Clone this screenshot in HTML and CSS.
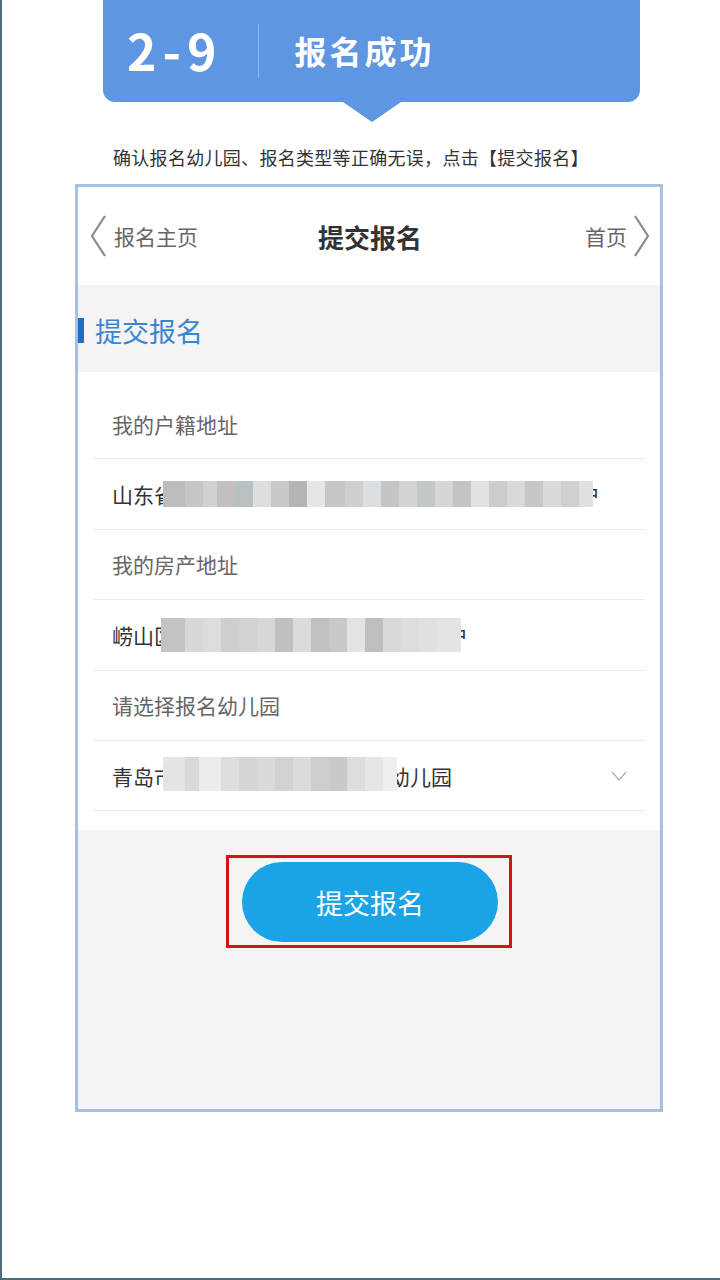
FILE: index.html
```html
<!DOCTYPE html>
<html lang="zh-CN">
<head>
<meta charset="utf-8">
<title>报名成功</title>
<link rel="stylesheet" href="styles.css">
</head>
<body>
<div class="page">
  <div class="banner">
    <span class="step">2-9</span>
    <span class="divider"></span>
    <span class="banner-title">报名成功</span>
  </div>
  <p class="hint">确认报名幼儿园、报名类型等正确无误，点击【提交报名】</p>

  <div class="phone">
    <div class="nav">
      <div class="nav-left">
        <svg class="chev" viewBox="0 0 18 44" width="18" height="44"><path d="M16 2 L3 22 L16 42" fill="none" stroke="#8a8a8a" stroke-width="2.2"/></svg>
        <span>报名主页</span>
      </div>
      <div class="nav-title">提交报名</div>
      <div class="nav-right">
        <span>首页</span>
        <svg class="chev" viewBox="0 0 18 44" width="18" height="44"><path d="M2 2 L15 22 L2 42" fill="none" stroke="#8a8a8a" stroke-width="2.2"/></svg>
      </div>
    </div>

    <div class="section-head">
      <span class="section-bar"></span>
      <span class="section-title">提交报名</span>
    </div>

    <div class="list">
      <div class="row label">我的户籍地址</div>
      <div class="row value">
        <span class="txt">山东省</span>
        <span class="mosaic m1">
          <i style="width:22px;background:#bdbdbd"></i><i style="width:18px;background:#c6c6c6"></i><i style="width:14px;background:#cfd1d3"></i><i style="width:18px;background:#c4bfbf"></i><i style="width:18px;background:#b9c0c2"></i><i style="width:18px;background:#dedede"></i><i style="width:18px;background:#c9c9c9"></i><i style="width:18px;background:#b4b4b4"></i><i style="width:18px;background:#e6e6e6"></i><i style="width:20px;background:#c8c6c6"></i><i style="width:18px;background:#cfcfcf"></i><i style="width:18px;background:#dcdfe1"></i><i style="width:18px;background:#c5c5c5"></i><i style="width:18px;background:#d3d3d3"></i><i style="width:18px;background:#c2c8ca"></i><i style="width:18px;background:#d6d6d6"></i><i style="width:18px;background:#c4c4c4"></i><i style="width:18px;background:#e1e1e1"></i><i style="width:18px;background:#cccccc"></i><i style="width:18px;background:#d9d9d9"></i><i style="width:18px;background:#c7c7c7"></i><i style="width:18px;background:#dadada"></i><i style="width:18px;background:#d0d0d0"></i><i style="width:14px;background:#e0e0e0"></i>
        </span>
        <span class="txt tail">户</span>
      </div>
      <div class="row label">我的房产地址</div>
      <div class="row value">
        <span class="txt">崂山区</span>
        <span class="mosaic m2">
          <i style="width:24px;background:#c3c3c3"></i><i style="width:18px;background:#d7d7d7"></i><i style="width:18px;background:#dcdcdc"></i><i style="width:18px;background:#cecece"></i><i style="width:18px;background:#d2d2d2"></i><i style="width:18px;background:#d7d7d7"></i><i style="width:18px;background:#c0c0c0"></i><i style="width:18px;background:#dbdbdb"></i><i style="width:18px;background:#c2c0c0"></i><i style="width:18px;background:#c8c8c8"></i><i style="width:18px;background:#e3e3e3"></i><i style="width:18px;background:#bebebe"></i><i style="width:18px;background:#d9d9d9"></i><i style="width:18px;background:#dddddd"></i><i style="width:18px;background:#e0e0e0"></i><i style="width:24px;background:#e4e4e4"></i>
        </span>
        <span class="txt tail">户</span>
      </div>
      <div class="row label">请选择报名幼儿园</div>
      <div class="row value select">
        <span class="txt">青岛市</span>
        <span class="mosaic m3">
          <i style="width:22px;background:#e4e4e4"></i><i style="width:14px;background:#d9d9d9"></i><i style="width:22px;background:#ececec"></i><i style="width:18px;background:#dedede"></i><i style="width:18px;background:#d6d6d6"></i><i style="width:18px;background:#dadada"></i><i style="width:18px;background:#d2d2d2"></i><i style="width:18px;background:#dbdbdb"></i><i style="width:18px;background:#cdcdcd"></i><i style="width:18px;background:#c9c9c9"></i><i style="width:18px;background:#dddddd"></i><i style="width:18px;background:#e6e6e6"></i><i style="width:14px;background:#eeeeee"></i>
        </span>
        <span class="txt tail3">幼儿园</span>
        <svg class="dd" viewBox="0 0 16 10" width="16" height="10"><path d="M1 1 L8 9 L15 1" fill="none" stroke="#b0b0b0" stroke-width="1.3"/></svg>
      </div>
    </div>

    <div class="bottom">
      <div class="mark">
        <div class="submit">提交报名</div>
      </div>
    </div>
  </div>
</div>
</body>
</html>
```

FILE: styles.css
```css
* { box-sizing: border-box; }

html, body {
  margin: 0;
  padding: 0;
  background: #ffffff;
}

body {
  font-family: "Noto Sans CJK SC", "Noto Sans", "Liberation Sans", sans-serif;
}

.page {
  width: 720px;
  height: 1280px;
  border-left: 2px solid #4f6d79;
  border-bottom: 2px solid #4f6d79;
  overflow: hidden;
}

/* ---------- banner ---------- */
.banner {
  position: relative;
  margin-left: 101px;
  width: 537px;
  height: 102px;
  background: #5f96e2;
  border-radius: 0 0 12px 12px;
  display: flex;
  align-items: center;
  padding-left: 24px;
  color: #ffffff;
}

.banner::after {
  content: "";
  position: absolute;
  left: 237px;
  top: 100px;
  width: 0;
  height: 0;
  border-left: 32px solid transparent;
  border-right: 32px solid transparent;
  border-top: 22px solid #5f96e2;
}

.step {
  font-size: 50px;
  font-weight: 700;
  letter-spacing: 6px;
  line-height: 1;
  margin-top: -4px;
}

.divider {
  width: 1px;
  height: 54px;
  background: rgba(255, 255, 255, 0.35);
  margin-left: 35px;
}

.banner-title {
  margin-left: 36px;
  font-size: 32px;
  font-weight: 700;
  letter-spacing: 3px;
  line-height: 1;
  margin-top: -2px;
}

/* ---------- hint ---------- */
.hint {
  margin: 43px 0 0 111px;
  font-size: 18px;
  line-height: 24px;
  color: #333333;
  letter-spacing: 0.3px;
}

/* ---------- phone frame ---------- */
.phone {
  margin: 15px 0 0 73px;
  width: 588px;
  height: 928px;
  border: 3px solid #a9bfe1;
  background: #f4f4f4;
  display: flex;
  flex-direction: column;
}

.nav {
  height: 98px;
  background: #ffffff;
  display: flex;
  align-items: center;
  justify-content: space-between;
  padding: 0 9px 0 11px;
}

.nav-left, .nav-right {
  display: flex;
  align-items: center;
  font-size: 21px;
  color: #666666;
  width: 120px;
}

.nav-left span { margin-left: 7px; }

.nav-right {
  justify-content: flex-end;
}

.nav-right span { margin-right: 6px; }

.nav-title {
  font-size: 26px;
  font-weight: 700;
  color: #333333;
}

.section-head {
  height: 87px;
  background: #f4f4f4;
  display: flex;
  align-items: center;
}

.section-bar {
  width: 6px;
  height: 25px;
  background: #1b6fc5;
  margin-top: 4px;
}

.section-title {
  margin-left: 11px;
  font-size: 27px;
  color: #3a85d2;
  margin-top: 4px;
}

.list {
  background: #ffffff;
  padding: 17px 15px 19px 15px;
}

.row {
  height: 70.4px;
  border-bottom: 1px solid #ebebeb;
  display: flex;
  align-items: center;
  padding-left: 19px;
  font-size: 21px;
}

.row.label {
  color: #666666;
}

.row.value {
  color: #333333;
}

.txt {
  white-space: nowrap;
}

.mosaic {
  display: flex;
  position: relative;
  z-index: 1;
  height: 26px;
}

.mosaic i {
  display: block;
  height: 100%;
}

.m1 { margin-left: -12px; }
.m2 { margin-left: -14px; height: 34px; }
.m3 { margin-left: -12px; height: 34px; margin-top: -4px; }

.tail {
  margin-left: -14px;
}

.tail3 {
  margin-left: -8px;
}

.select .dd {
  margin-left: auto;
  margin-right: 18px;
}

.bottom {
  flex: 1;
  display: flex;
  justify-content: center;
  align-items: flex-start;
  padding-top: 25px;
}

.mark {
  border: 3px solid #d3121b;
  padding: 4px 11px 3px 13px;
}

.submit {
  width: 256px;
  height: 80px;
  border-radius: 40px;
  background: #1aa3e6;
  color: #ffffff;
  font-size: 27px;
  display: flex;
  align-items: center;
  justify-content: center;
}
```
